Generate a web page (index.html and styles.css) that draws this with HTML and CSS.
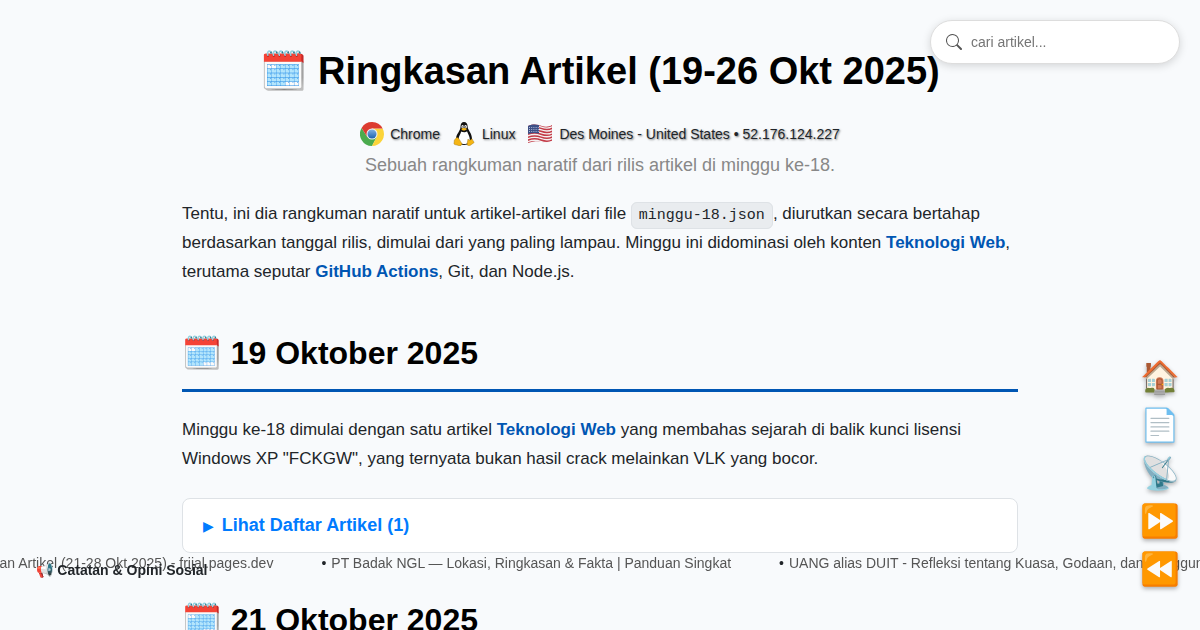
FILE: index.html
```html
<!DOCTYPE html>
<html lang="id">
<head>
<meta charset="utf-8">
<meta name="viewport" content="width=device-width, initial-scale=1">
<title>Ringkasan Artikel (19-26 Okt 2025)</title>
<link rel="stylesheet" href="styles.css">
</head>
<body>
<form class="search" role="search">
  <svg class="search-icon" viewBox="0 0 16 16" aria-hidden="true"><path d="M11.742 10.344a6.5 6.5 0 1 0-1.397 1.398h-.001c.03.04.062.078.098.115l3.85 3.85a1 1 0 0 0 1.415-1.414l-3.85-3.85a1.007 1.007 0 0 0-.115-.1zM12 6.5a5.5 5.5 0 1 1-11 0 5.500 5.500 0 0 1 11 0z"/></svg>
  <input class="search-input" type="search" placeholder="cari artikel..." aria-label="Cari artikel">
</form>
<main class="page">
  <header class="header">
    <h1 class="title">🗓️ Ringkasan Artikel (19-26 Okt 2025)</h1>
    <div class="visitor">
      <span class="visitor-item">
        <svg class="visitor-icon" viewBox="0 0 48 48" aria-hidden="true"><defs><linearGradient id="blue" x1="0" y1="0" x2="0" y2="1"><stop offset="0" stop-color="#7fb0e3"/><stop offset="1" stop-color="#1b62ae"/></linearGradient></defs><path d="M3.200 12A24 24 0 0 0 24 48L34 29 24 24 14 29z" fill="#4bab4e"/><path d="M24 13H45.300A24 24 0 0 1 24 48L33.500 29.500z" fill="#fbd43a"/><path d="M3.200 12A24 24 0 0 1 45.300 13H24L14 29z" fill="#dc3b30"/><circle cx="24" cy="24" r="11" fill="#f4f4f4"/><circle cx="24" cy="24" r="9" fill="url(#blue)"/></svg>
        Chrome
      </span>
      <span class="visitor-item">
        <svg class="visitor-icon" viewBox="0 0 24 24" aria-hidden="true"><path d="M8.500 5C8.500 1.500 9.800 0 12 0s3.700 1.700 3.700 5c0 3 4.300 6 4.300 12 0 3-3 6-8 6s-8-3-8-6c0-5 4.500-8 4.500-12z" fill="#111"/><path d="M9.200 9.500c1 .8 4.500 1 5.800-.3 1 3 2.800 4.800 2.800 8.300 0 3-2.300 4.500-5.500 4.500s-5.700-1.500-5.700-4.500c0-3.500 1.700-4.500 2.600-8z" fill="#fff"/><ellipse cx="10.600" cy="4.700" rx="1.200" ry="1.600" fill="#fff"/><ellipse cx="13.600" cy="4.700" rx="1.300" ry="1.700" fill="#fff"/><circle cx="10.900" cy="4.900" r=".6"/><circle cx="13.300" cy="4.900" r=".6"/><path d="M9.300 7c1-1.300 4-1.400 5.700 0-1 1.400-4.300 2.600-5.700 0z" fill="#f5b514"/><path d="M4.500 15.500c2-.7 3.500 3.500 5.300 5.800.6 2.200-1.700 2.900-3.400 2.200-1.700-.8-4.100-.5-4.400-1.700-.2-1 .4-1.900.3-3.300-.1-1.300 1.600-1 2.200-3zM16 17c1.500 2.300 2.500.8 4-.3.700.8.500 2 1.900 3 1.200 1-1.800 1.900-3.100 3.300-1.300 1.300-4 .9-3.700-1.200z" fill="#f5b514" stroke="#8b6408" stroke-width=".4"/></svg>
        Linux
      </span>
      <span class="visitor-item">
        <svg class="visitor-icon visitor-flag" viewBox="0 0 26 20" aria-hidden="true"><defs><clipPath id="wave"><path d="M1 2C7-1 12 1 15 2s7 1 10-1v16c-3 2-7 2-10 1s-8-1-14 1z"/></clipPath></defs><g clip-path="url(#wave)"><path d="M0 0h26v20H0z" fill="#f4f1f1"/><path d="M0 2Q7-1 14 1.500T26 1M0 4.900Q7 1.900 14 4.400T26 3.900M0 7.800Q7 4.800 14 7.300T26 6.800M0 10.700Q7 7.700 14 10.200T26 9.700M0 13.600Q7 10.600 14 13.100T26 12.600M0 16.500Q7 13.500 14 16T26 15.500M0 19.400Q7 16.400 14 18.900T26 18.400" fill="none" stroke="#c33b48" stroke-width="1.500"/><path d="M0 0h12v9.500Q6 8 0 10.500z" fill="#3c4f86"/><path d="M2 3.500h10M2 5.500h10M2 7.500h10" stroke="#c9d0e6" stroke-width=".8" stroke-dasharray="1 1.200"/></g></svg>
        Des Moines - United States • 52.176.124.227
      </span>
    </div>
    <p class="subtitle">Sebuah rangkuman naratif dari rilis artikel di minggu ke-18.</p>
  </header>
  <p class="text">Tentu, ini dia rangkuman naratif untuk artikel-artikel dari file <code class="code">minggu-18.json</code>, diurutkan secara bertahap berdasarkan tanggal rilis, dimulai dari yang paling lampau. Minggu ini didominasi oleh konten <strong class="topic">Teknologi Web</strong>, terutama seputar <strong class="topic">GitHub Actions</strong>, Git, dan Node.js.</p>
  <section class="day">
    <h2 class="date">🗓️ 19 Oktober 2025</h2>
    <p class="text">Minggu ke-18 dimulai dengan satu artikel <strong class="topic">Teknologi Web</strong> yang membahas sejarah di balik kunci lisensi Windows XP "FCKGW", yang ternyata bukan hasil crack melainkan VLK yang bocor.</p>
    <details class="articles">
      <summary class="articles-toggle">Lihat Daftar Artikel (1)</summary>
    </details>
  </section>
  <section class="day">
    <h2 class="date">🗓️ 21 Oktober 2025</h2>
  </section>
</main>
<div class="ticker">
  <ul class="ticker-track">
    <li class="ticker-item"><a class="ticker-link" href="#">Ringkasan Artikel (21-28 Okt 2025) - frijal.pages.dev</a></li>
    <li class="ticker-item"><a class="ticker-link" href="#">PT Badak NGL — Lokasi, Ringkasan &amp; Fakta | Panduan Singkat</a></li>
    <li class="ticker-item"><a class="ticker-link" href="#">UANG alias DUIT - Refleksi tentang Kuasa, Godaan, dan Pengguna</a></li>
  </ul>
</div>
<div class="category">📢 Catatan &amp; Opini Sosial</div>
<nav class="floating" aria-label="Navigasi cepat">
  <a class="floating-link" href="#" aria-label="Beranda">🏠</a>
  <a class="floating-link" href="#" aria-label="Daftar isi">📄</a>
  <a class="floating-link" href="#" aria-label="RSS">📡</a>
  <a class="floating-link" href="#" aria-label="Berikutnya">⏩</a>
  <a class="floating-link" href="#" aria-label="Sebelumnya">⏪</a>
</nav>
</body>
</html>
```
FILE: styles.css
```css
* { box-sizing: border-box; }
body {
  margin: 0;
  height: 100vh;
  overflow: hidden;
  background: #f8fafc;
  color: #212529;
  font-family: "Liberation Sans", Arial, "Noto Color Emoji", sans-serif;
  font-size: 17px;
  line-height: 29px;
}
.page { max-width: 900px; margin: 0 auto; padding: 40px 32px; }
.header { text-align: center; margin-bottom: 19px; }
.title { margin: 0 0 18px; color: #000; font-size: 38px; line-height: 62px; }
.visitor {
  display: flex;
  justify-content: center;
  flex-wrap: wrap;
  gap: 12px;
  font-size: 14px;
  line-height: 28px;
  text-shadow: 1px 1px 2px rgba(0, 0, 0, 0.5);
}
.visitor-item { display: flex; align-items: center; gap: 6px; }
.visitor-icon { width: 24px; height: 24px; }
.visitor-flag { width: 26px; height: 20px; }
.subtitle { margin: 2px 0 0; color: #888; font-size: 18px; line-height: 30px; }
.text { margin: 0; }
.code {
  padding: 4px 7px;
  border: 1px solid #dee2e6;
  border-radius: 6px;
  background: #e9ecef;
  font-family: "Liberation Mono", monospace;
  font-size: 15px;
  line-height: 16px;
}
.topic { color: #0056b3; }
.day { margin-top: 41px; }
.date {
  margin: 0 0 23px;
  padding-bottom: 10px;
  border-bottom: 3px solid #0056b3;
  color: #000;
  font-size: 32px;
  line-height: 52px;
}
.articles {
  margin-top: 25px;
  padding: 12px 20px;
  border: 1px solid #dee2e6;
  border-radius: 8px;
  background: #fff;
}
.articles-toggle {
  display: flex;
  align-items: baseline;
  gap: 8px;
  color: #007bff;
  font-size: 18px;
  font-weight: bold;
  list-style: none;
  cursor: pointer;
}
.articles-toggle::before {
  content: "\25B6\FE0E";
  font-family: "DejaVu Sans", sans-serif;
  font-size: 14px;
  line-height: 16px;
}
.search {
  position: fixed;
  z-index: 3;
  top: 20px;
  right: 20px;
  display: flex;
  align-items: center;
  gap: 9px;
  width: 250px;
  height: 44px;
  padding: 0 15px;
  border: 1px solid #ddd;
  border-radius: 22px;
  background: #fff;
  box-shadow: 0 2px 8px rgba(0, 0, 0, 0.15);
}
.search-icon { flex: none; width: 16px; height: 16px; fill: #555; }
.search-input {
  flex: 1;
  min-width: 0;
  padding: 0;
  border: 0;
  outline: 0;
  background: transparent;
  font: 14px "Liberation Sans", Arial, sans-serif;
}
.ticker { position: fixed; right: 0; bottom: 52px; left: 0; overflow: hidden; }
.ticker-track {
  display: flex;
  gap: 48px;
  width: max-content;
  margin: 0 0 0 -61px;
  padding: 0;
  list-style: none;
  font-size: 14px;
  white-space: nowrap;
}
.ticker-item::before { content: "•"; margin-right: 5px; }
.ticker-link { color: #555; text-decoration: none; }
.category {
  position: fixed;
  bottom: 45px;
  left: 36px;
  font-size: 14px;
  font-weight: bold;
}
.floating {
  position: fixed;
  z-index: 2;
  right: 20px;
  bottom: 41px;
  display: flex;
  flex-direction: column;
  gap: 8px;
}
.floating-link {
  font-size: 32px;
  line-height: 40px;
  text-decoration: none;
  filter: drop-shadow(0 2px 2px rgba(0, 0, 0, 0.3));
}
```
